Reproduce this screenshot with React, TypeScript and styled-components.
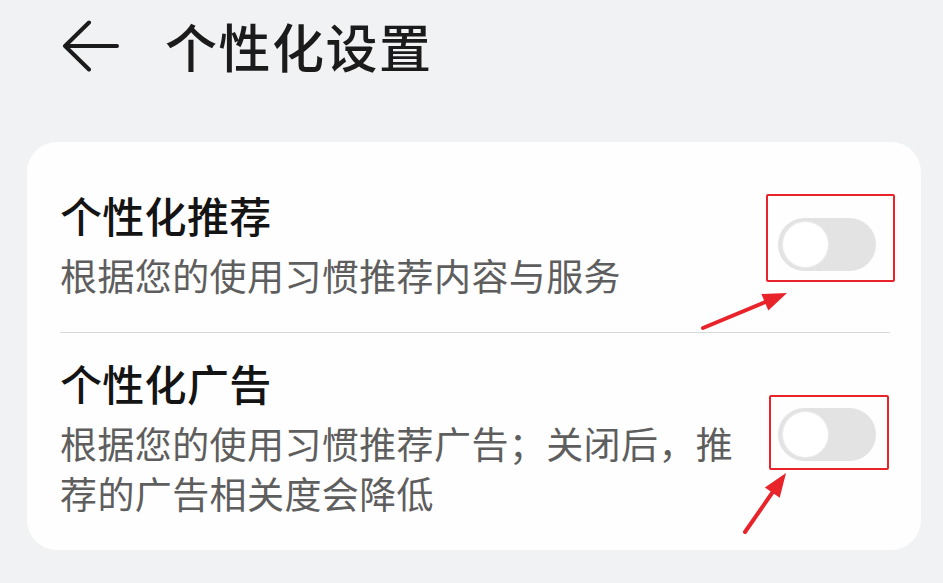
import React, { useState } from 'react';
import styled, { createGlobalStyle } from 'styled-components';

const GlobalStyle = createGlobalStyle`
  html, body {
    margin: 0;
    padding: 0;
    background: #f1f2f4;
  }

  body {
    font-family: "Noto Sans CJK SC", "Noto Sans", sans-serif;
    -webkit-font-smoothing: antialiased;
  }
`;

const Page = styled.div`
  width: 943px;
  height: 583px;
  overflow: hidden;
  background: #f1f2f4;
`;

const Header = styled.header`
  display: flex;
  align-items: center;
  height: 92px;
  padding-left: 62px;
  gap: 45px;
`;

const BackButton = styled.button`
  display: flex;
  padding: 0;
  border: 0;
  background: none;
  cursor: pointer;
`;

const Title = styled.h1`
  margin: 0;
  font-size: 52px;
  line-height: 52px;
  letter-spacing: 1.5px;
  font-weight: 500;
  color: #1b1b1b;
`;

const Card = styled.section`
  margin: 50px 0 0 27px;
  width: 894px;
  box-sizing: border-box;
  padding: 23px 31px 0 33px;
  background: #fefefe;
  border-radius: 30px;
`;

const Row = styled.div`
  display: flex;
  align-items: center;
  gap: 40px;
  padding: 25px 14px 32px 0;

  & + & {
    border-top: 1px solid #d8d8d8;
  }
`;

const TextBlock = styled.div`
  flex: 1;
  min-width: 0;
`;

const ItemTitle = styled.div`
  font-size: 42px;
  line-height: 50px;
  letter-spacing: 0.3px;
  font-weight: 500;
  color: #141414;
`;

const ItemDesc = styled.div`
  margin-top: 10px;
  font-size: 37px;
  line-height: 50px;
  letter-spacing: 0.4px;
  color: #5e5e5e;
`;

const SwitchWrap = styled.div<{ $lift: number }>`
  position: relative;
  flex: none;
  margin-bottom: ${(p) => p.$lift}px;
`;

const Track = styled.button<{ $on: boolean }>`
  display: flex;
  align-items: center;
  width: 98px;
  height: 53px;
  padding: 0 4px 0 5px;
  box-sizing: border-box;
  border: 0;
  border-radius: 27px;
  background: ${(p) => (p.$on ? '#2f7bf6' : '#e3e3e3')};
  justify-content: ${(p) => (p.$on ? 'flex-end' : 'flex-start')};
  cursor: pointer;
`;

const Knob = styled.span`
  width: 45px;
  height: 45px;
  border-radius: 50%;
  background: #ffffff;
  box-shadow: 0 0 0 1px #ececec;
`;

const Highlight = styled.div`
  position: absolute;
  border: 2.5px solid #e8232a;
  border-radius: 2px;
  pointer-events: none;
`;

const ArrowSvg = styled.svg`
  position: absolute;
  left: -120px;
  top: 0;
  overflow: visible;
  pointer-events: none;
`;

interface BoxT {
  left: number;
  top: number;
  right: number;
  bottom: number;
}

interface ArrowT {
  tail: [number, number];
  tip: [number, number];
}

function Arrow({ tail, tip }: ArrowT) {
  const dx = tip[0] - tail[0];
  const dy = tip[1] - tail[1];
  const len = Math.sqrt(dx * dx + dy * dy);
  const ux = dx / len;
  const uy = dy / len;
  const head = 24;
  const half = 9;
  const bx = tip[0] - ux * head;
  const by = tip[1] - uy * head;
  const nx = -uy * half;
  const ny = ux * half;
  // shift into the svg, which starts 120px to the left of the switch
  const o = 120;

  return (
    <ArrowSvg width={1} height={1}>
      <line
        x1={tail[0] + o}
        y1={tail[1]}
        x2={bx + ux * 4 + o}
        y2={by + uy * 4}
        stroke="#e8232a"
        strokeWidth={4}
        strokeLinecap="round"
      />
      <polygon
        points={`${tip[0] + o},${tip[1]} ${bx + nx + o},${by + ny} ${bx - nx + o},${by - ny}`}
        fill="#e8232a"
      />
    </ArrowSvg>
  );
}

interface SettingT {
  title: string;
  desc: string;
  lift: number;
  box: BoxT;
  arrow: ArrowT;
}

const settings: SettingT[] = [
  {
    title: '个性化推荐',
    desc: '根据您的使用习惯推荐内容与服务',
    lift: 2,
    box: { left: -12, top: -24, right: -19, bottom: -11 },
    arrow: { tail: [-75, 110], tip: [9, 75] },
  },
  {
    title: '个性化广告',
    desc: '根据您的使用习惯推荐广告；关闭后，推荐的广告相关度会降低',
    lift: 7,
    box: { left: -9, top: -13, right: -13, bottom: -9 },
    arrow: { tail: [-33, 124], tip: [8, 65] },
  },
];

function BackIcon() {
  return (
    <svg width="58" height="52" viewBox="0 0 58 52" fill="none">
      <path
        d="M3 26 H55 M27 2.5 L3 26 L27 49.5"
        stroke="#1b1b1b"
        strokeWidth="4"
        strokeLinecap="round"
        strokeLinejoin="round"
      />
    </svg>
  );
}

function SettingRow({ item }: { item: SettingT }) {
  const [on, setOn] = useState(false);

  return (
    <Row>
      <TextBlock>
        <ItemTitle>{item.title}</ItemTitle>
        <ItemDesc>{item.desc}</ItemDesc>
      </TextBlock>
      <SwitchWrap $lift={item.lift}>
        <Track $on={on} onClick={() => setOn(!on)} aria-pressed={on}>
          <Knob />
        </Track>
        <Highlight style={item.box} />
        <Arrow tail={item.arrow.tail} tip={item.arrow.tip} />
      </SwitchWrap>
    </Row>
  );
}

export default function App() {
  return (
    <Page>
      <GlobalStyle />
      <Header>
        <BackButton aria-label="返回">
          <BackIcon />
        </BackButton>
        <Title>个性化设置</Title>
      </Header>
      <Card>
        {settings.map((item) => (
          <SettingRow key={item.title} item={item} />
        ))}
      </Card>
    </Page>
  );
}
